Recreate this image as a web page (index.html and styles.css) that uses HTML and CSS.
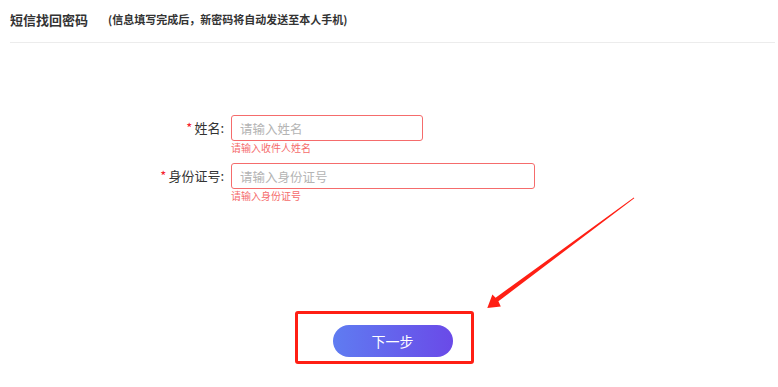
FILE: index.html
```html
<!DOCTYPE html>
<html lang="zh-CN">
<head>
<meta charset="utf-8">
<title>短信找回密码</title>
<link rel="stylesheet" href="styles.css">
</head>
<body>
<div class="page">
  <div class="header">
    <span class="title">短信找回密码</span>
    <span class="subtitle">(信息填写完成后，新密码将自动发送至本人手机)</span>
  </div>
  <form class="form">
    <div class="row">
      <label class="label"><span class="star">*</span>姓名:</label>
      <div class="field">
        <input class="input input-short" type="text" placeholder="请输入姓名">
        <div class="error">请输入收件人姓名</div>
      </div>
    </div>
    <div class="row">
      <label class="label"><span class="star">*</span>身份证号:</label>
      <div class="field">
        <input class="input input-long" type="text" placeholder="请输入身份证号">
        <div class="error">请输入身份证号</div>
      </div>
    </div>
    <div class="actions">
      <button type="button" class="btn">下一步</button>
    </div>
  </form>
  <div class="highlight"></div>
  <svg class="arrow" width="778" height="387" viewBox="0 0 778 387">
    <polygon fill="#ff1f14" points="633.8,197.6 634.3,198.3 498.4,301.2 500.8,306.6 487.3,308 492.4,294.4 495.6,297.8"/>
  </svg>
</div>
</body>
</html>
```

FILE: styles.css
```css
* { box-sizing: border-box; }
html, body { margin: 0; padding: 0; background: #fff; }
body {
  font-family: "Noto Sans CJK SC", "Microsoft YaHei", sans-serif;
  color: #333;
}
.page {
  position: relative;
  width: 778px;
  height: 387px;
  padding: 0 3px 0 10px;
  overflow: hidden;
}
.header {
  height: 43px;
  display: flex;
  align-items: center;
  padding-bottom: 4px;
  border-bottom: 1px solid #ececec;
}
.title {
  font-size: 13px;
  font-weight: 700;
  color: #333;
}
.subtitle {
  font-size: 11px;
  font-weight: 700;
  color: #333;
  margin-left: 20px;
}
.form {
  margin-top: 72px;
  display: flex;
  flex-direction: column;
}
.row {
  display: flex;
  align-items: flex-start;
  height: 48px;
}
.label {
  width: 221px;
  padding-right: 7px;
  text-align: right;
  font-size: 13px;
  line-height: 26px;
  color: #333;
}
.star {
  color: #f5222d;
  margin-right: 2px;
}
.field {
  display: flex;
  flex-direction: column;
}
.input {
  height: 26px;
  border: 1px solid #f56c6c;
  border-radius: 3px;
  padding: 0 8px;
  font-family: inherit;
  font-size: 12.5px;
  color: #333;
  outline: none;
}
.input::placeholder { color: #b4b4b4; }
.input-short { width: 192px; }
.input-long { width: 304px; }
.error {
  font-size: 10px;
  line-height: 14px;
  color: #f56c6c;
}
.actions {
  display: flex;
  justify-content: center;
  margin-top: 114px;
}
.btn {
  width: 120px;
  height: 32px;
  border: none;
  border-radius: 16px;
  background: linear-gradient(90deg, #5f7cf1 0%, #6a4ae8 100%);
  color: #fff;
  font-family: inherit;
  font-size: 14px;
  cursor: pointer;
}
.highlight {
  position: absolute;
  left: 295px;
  top: 311px;
  width: 179px;
  height: 53px;
  border: 3px solid #ff1f14;
  border-radius: 3px;
}
.arrow {
  position: absolute;
  left: 0;
  top: 0;
  pointer-events: none;
}
```
